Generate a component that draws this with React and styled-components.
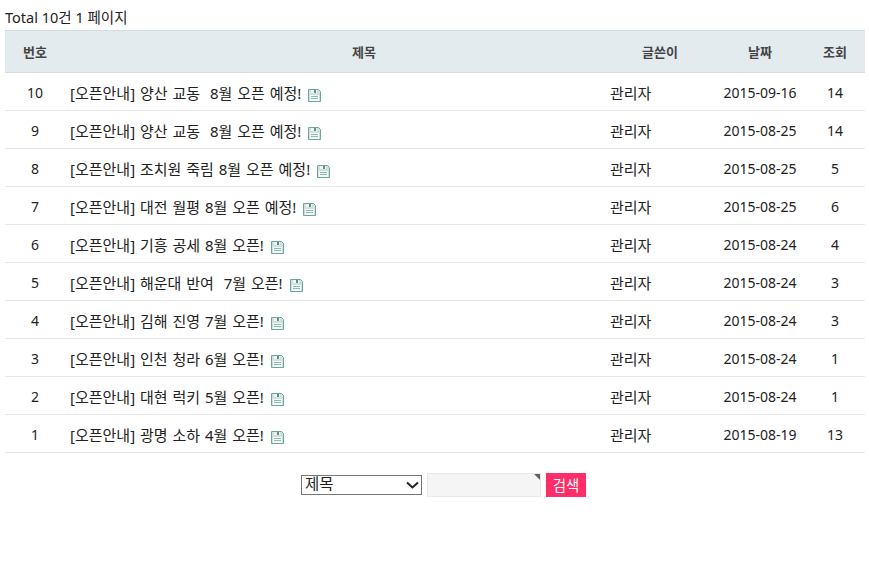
import React from 'react';
import styled, { createGlobalStyle } from 'styled-components';

const Global = createGlobalStyle`
  html, body { margin: 0; padding: 0; background: #fff; }
  body { font-family: "Noto Sans", "Noto Sans CJK KR", sans-serif; font-size: 14px; color: #222; }
`;
const Page = styled.div`
  width: 860px;
  padding: 8px 0 0 5px;
  height: 553px;
`;
const Total = styled.div`
  height: 22px;
  line-height: 19px;
  font-size: 14.5px;
  color: #222;
`;
const Board = styled.table`
  width: 860px;
  table-layout: fixed;
  border-collapse: collapse;
  border-spacing: 0;
`;
const Head = styled.th`
  height: 42px;
  padding: 0 0 0 ${p => p.$shift || 0}px;
  background: #e4ebef;
  border-top: 1px solid #d3dde1;
  border-bottom: 1px solid #d3dde1;
  font-size: 13px;
  font-weight: 700;
  color: #444;
  text-align: center;
  box-sizing: border-box;
  width: ${p => p.$w}px;
`;
const Cell = styled.td`
  height: 38px;
  padding: 3px 0 0 0;
  border-bottom: 1px solid #e6e8e8;
  text-align: center;
  font-size: 14px;
  line-height: 20px;
  color: #222;
  box-sizing: border-box;
`;
const TextCell = styled(Cell)`
  padding-left: 5px;
  text-align: left;
  font-size: 15px;
  word-spacing: 1px;
  white-space: pre;
`;
const Icon = styled.svg`
  display: inline-block;
  vertical-align: -3px;
  margin-left: 7px;
`;
const SearchBar = styled.form`
  display: flex;
  justify-content: center;
  align-items: center;
  gap: 5px;
  margin-top: 20px;
  padding-left: 17px;
`;
const SelectWrap = styled.div`
  position: relative;
  width: 121px;
  height: 20px;
`;
const Select = styled.select`
  display: block;
  width: 100%;
  height: 100%;
  box-sizing: border-box;
  appearance: none;
  padding: 0 0 3px 3px;
  border: 1px solid #767676;
  border-radius: 0;
  background: #fff;
  font-family: "Noto Sans CJK KR", sans-serif;
  font-size: 15.5px;
  line-height: 15px;
  color: #222;
  outline: 0;
`;
const Chevron = styled.svg`
  position: absolute;
  top: 6px;
  right: 3px;
  pointer-events: none;
`;
const InputWrap = styled.div`
  position: relative;
  width: 114px;
  height: 24px;
`;
const Input = styled.input`
  width: 100%;
  height: 100%;
  box-sizing: border-box;
  border: 1px solid #e6e9e9;
  background: #f5f5f5;
  padding: 0;
  outline: 0;
`;
const Corner = styled.span`
  position: absolute;
  top: 1px;
  right: 1px;
  width: 0;
  height: 0;
  border-top: 6px solid #5f625c;
  border-left: 6px solid transparent;
`;
const Submit = styled.button`
  width: 40px;
  height: 24px;
  padding: 0 0 2px;
  border: 0;
  background: #ff2d68;
  color: #fff;
  font-family: "Noto Sans CJK KR", sans-serif;
  font-size: 14.5px;
`;

const Floppy = () => (
  <Icon width="13" height="13" viewBox="0 0 13 13" aria-hidden="true">
    <path d="M0.5 0.5H10.5L12.5 2.5V12.5H0.5Z" fill="#cfe2de" stroke="#6fa5a1" />
    <rect x="3" y="1" width="6" height="3" fill="#f0f5f3" />
    <rect x="6" y="1" width="2" height="3" fill="#5f8f8c" />
    <rect x="2" y="6" width="9" height="6" fill="#f5f9f8" />
    <path d="M3 7.5H10M3 9.5H10" stroke="#8fb9b4" />
  </Icon>
);

const rows = [
  [10, '양산 교동  8월 오픈 예정!', '2015-09-16', 14],
  [9, '양산 교동  8월 오픈 예정!', '2015-08-25', 14],
  [8, '조치원 죽림 8월 오픈 예정!', '2015-08-25', 5],
  [7, '대전 월평 8월 오픈 예정!', '2015-08-25', 6],
  [6, '기흥 공세 8월 오픈!', '2015-08-24', 4],
  [5, '해운대 반여  7월 오픈!', '2015-08-24', 3],
  [4, '김해 진영 7월 오픈!', '2015-08-24', 3],
  [3, '인천 청라 6월 오픈!', '2015-08-24', 1],
  [2, '대현 럭키 5월 오픈!', '2015-08-24', 1],
  [1, '광명 소하 4월 오픈!', '2015-08-19', 13],
];

export default function App() {
  return (
    <Page>
      <Global />
      <Total>Total 10건 1 페이지</Total>
      <Board>
        <thead>
          <tr>
            <Head $w={60}>번호</Head>
            <Head $w={540} $shift={58}>제목</Head>
            <Head $w={110}>글쓴이</Head>
            <Head $w={90}>날짜</Head>
            <Head $w={60}>조회</Head>
          </tr>
        </thead>
        <tbody>
          {rows.map(([n, title, date, hits]) => (
            <tr key={n}>
              <Cell>{n}</Cell>
              <TextCell>[오픈안내] {title}<Floppy /></TextCell>
              <TextCell>관리자</TextCell>
              <Cell>{date}</Cell>
              <Cell>{hits}</Cell>
            </tr>
          ))}
        </tbody>
      </Board>
      <SearchBar onSubmit={e => e.preventDefault()}>
        <SelectWrap>
          <Select defaultValue="제목">
            <option>제목</option>
          </Select>
          <Chevron width="13" height="8" viewBox="0 0 13 8" aria-hidden="true">
            <path d="M1 1.5L6.5 6.5L12 1.5" fill="none" stroke="#222" strokeWidth="2" />
          </Chevron>
        </SelectWrap>
        <InputWrap>
          <Input type="text" />
          <Corner />
        </InputWrap>
        <Submit type="submit">검색</Submit>
      </SearchBar>
    </Page>
  );
}
